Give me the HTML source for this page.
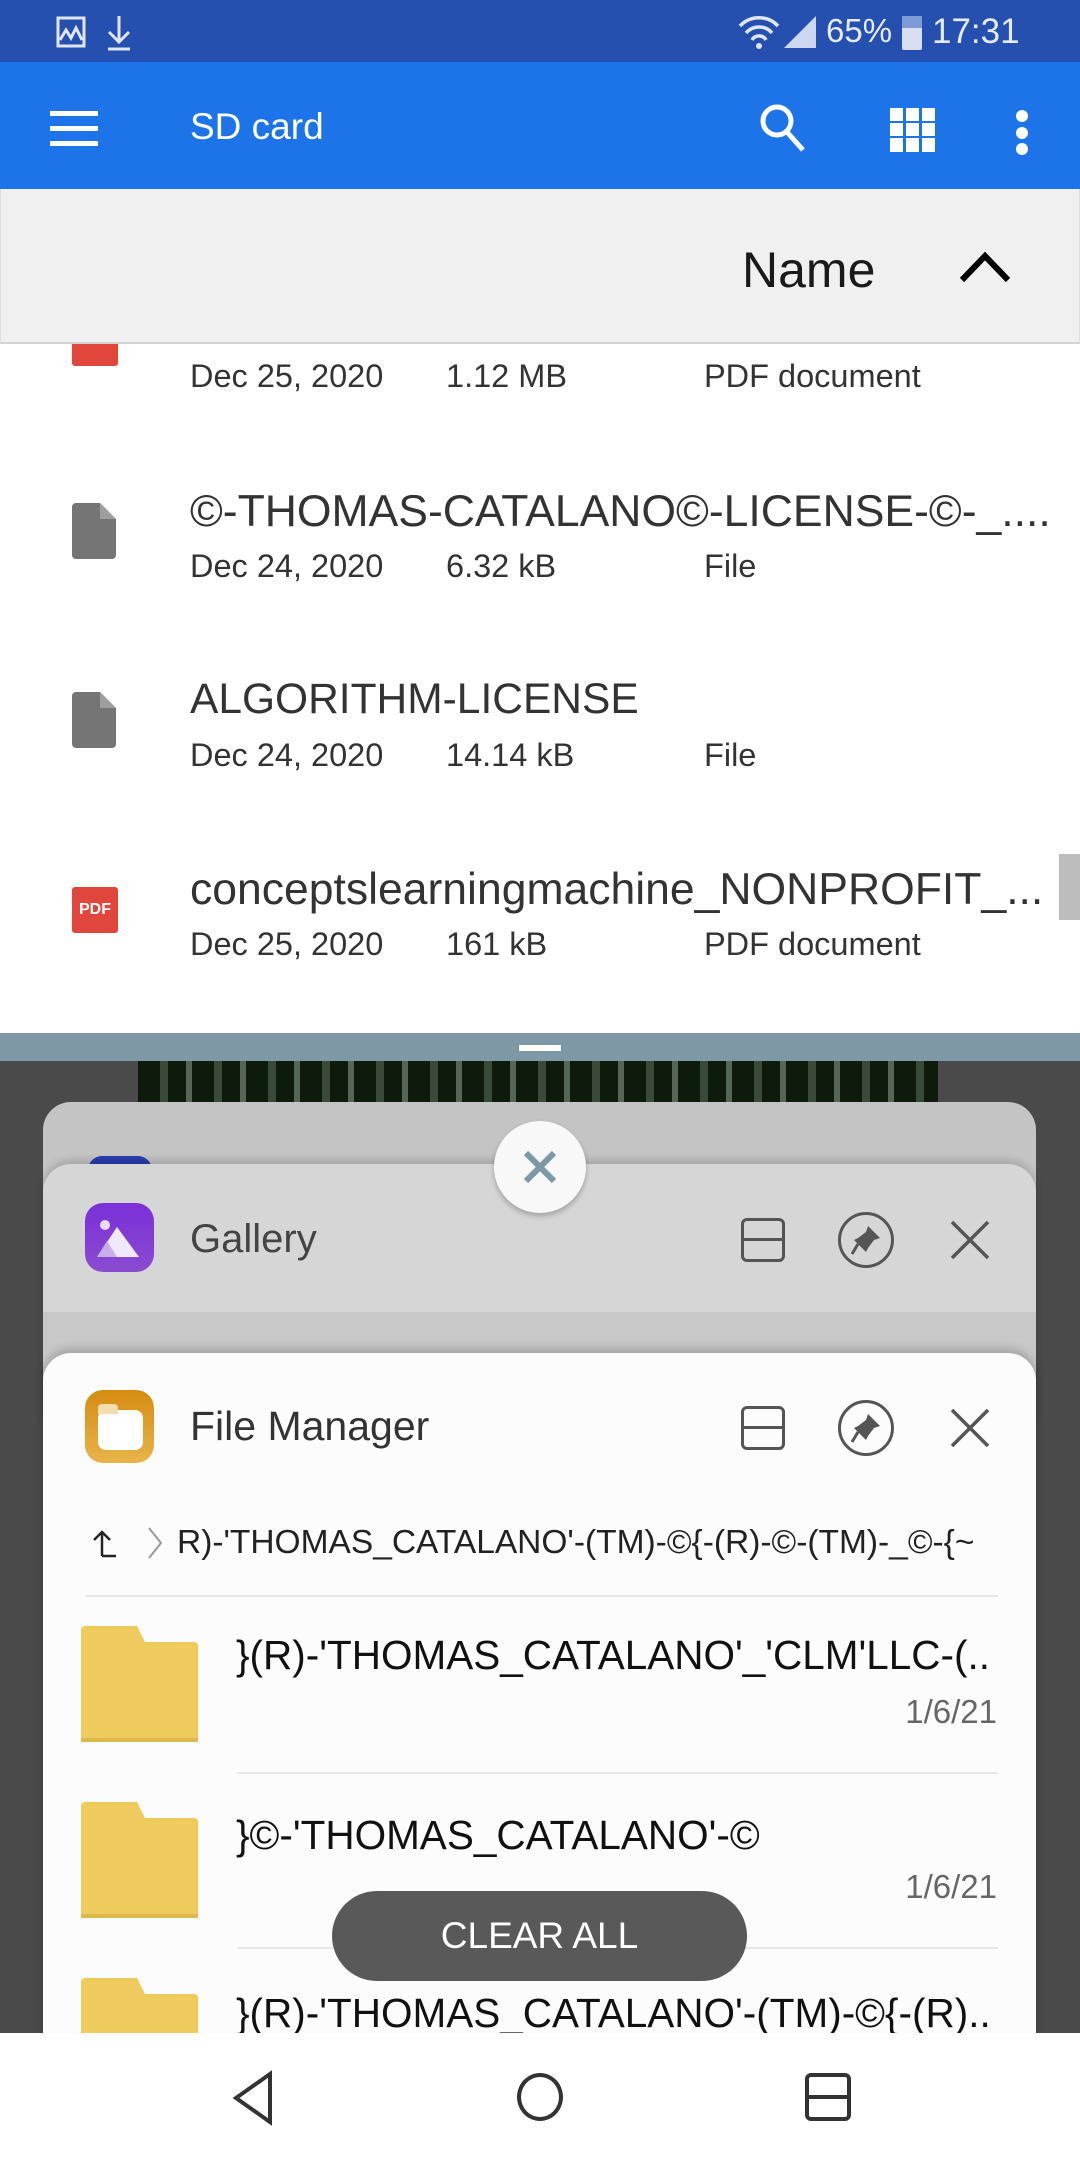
<!DOCTYPE html>
<html><head><meta charset="utf-8"><style>
*{margin:0;padding:0;box-sizing:border-box}
body{width:1080px;height:2160px;position:relative;overflow:hidden;font-family:"Liberation Sans",sans-serif;background:#4a4a4a}
.a{position:absolute}
.t{position:absolute;white-space:nowrap;line-height:1}
</style></head><body>
<div class="a" style="left:0;top:0;width:1080px;height:1033px;background:#fff"></div>
<div class="a" style="left:0;top:0;width:1080px;height:62px;background:#2550b0"></div>
<svg class="a" style="left:56px;top:16px" width="80" height="36" viewBox="0 0 80 36" fill="none" stroke="#e0e6f5" stroke-width="3"><rect x="2" y="2" width="26" height="28"/><path d="M4 24l6-10 5 8 5-10 6 12"/><path d="M63 0v26M53 16l10 10 10-10M52 33h22"/></svg>
<svg class="a" style="left:738px;top:14px" width="80" height="36" viewBox="0 0 80 36"><g fill="none" stroke="#e0e6f5" stroke-width="3.5"><path d="M2 12a26 26 0 0 1 38 0M8 19a17 17 0 0 1 26 0M14 26a8 8 0 0 1 14 0"/></g><circle cx="21" cy="32" r="3" fill="#e0e6f5"/><path d="M46 34L78 2V34Z" fill="#e0e6f5" opacity=".9"/></svg>
<div class="t" style="left:826px;top:14px;font-size:33px;color:#e6ebf7">65%</div>
<div class="a" style="left:902px;top:16px;width:20px;height:34px;background:#d8dff0;border-radius:2px"></div>
<div class="a" style="left:902px;top:16px;width:20px;height:12px;background:#7f9ad8"></div>
<div class="t" style="left:932px;top:14px;font-size:35px;color:#e6ebf7">17:31</div>
<div class="a" style="left:0;top:62px;width:1080px;height:127px;background:#1c74e8"></div>
<div class="a" style="left:50px;top:111px;width:48px;height:5px;background:#fff"></div>
<div class="a" style="left:50px;top:126px;width:48px;height:5px;background:#fff"></div>
<div class="a" style="left:50px;top:141px;width:48px;height:5px;background:#fff"></div>
<div class="t" style="left:190px;top:108px;font-size:37px;color:#fff">SD card</div>
<svg class="a" style="left:758px;top:102px" width="52" height="52" viewBox="0 0 52 52" fill="none" stroke="#fff" stroke-width="5"><circle cx="19" cy="19" r="14"/><path d="M29 30l16 18"/></svg>
<svg class="a" style="left:890px;top:108px" width="46" height="44" viewBox="0 0 46 44" fill="#fff"><rect x="0" y="0" width="13" height="13"/><rect x="16" y="0" width="13" height="13"/><rect x="32" y="0" width="13" height="13"/><rect x="0" y="15" width="13" height="13"/><rect x="16" y="15" width="13" height="13"/><rect x="32" y="15" width="13" height="13"/><rect x="0" y="30" width="13" height="14"/><rect x="16" y="30" width="13" height="14"/><rect x="32" y="30" width="13" height="14"/></svg>
<div class="a" style="left:1016px;top:110px;width:12px;height:12px;border-radius:6px;background:#fff"></div>
<div class="a" style="left:1016px;top:127px;width:12px;height:12px;border-radius:6px;background:#fff"></div>
<div class="a" style="left:1016px;top:143px;width:12px;height:12px;border-radius:6px;background:#fff"></div>
<div class="a" style="left:72px;top:320px;width:46px;height:46px;background:#e0463c;border-radius:3px"></div>
<div class="t" style="left:190px;top:360px;font-size:32.5px;color:#333">Dec 25, 2020</div>
<div class="t" style="left:446px;top:360px;font-size:32.5px;color:#333">1.12 MB</div>
<div class="t" style="left:704px;top:360px;font-size:32.5px;color:#333">PDF document</div>
<div class="a" style="left:0;top:189px;width:1080px;height:155px;background:#f0f0f0;border-bottom:2px solid #d4d4d4;border-left:1px solid #ddd;border-right:1px solid #ddd"></div>
<div class="t" style="left:742px;top:245px;font-size:50px;color:#1a1a1a">Name</div>
<svg class="a" style="left:958px;top:250px" width="54" height="34" viewBox="0 0 54 34" fill="none" stroke="#000" stroke-width="6"><path d="M4 30L27 6l23 24"/></svg>

<svg class="a" style="left:72px;top:503px" width="44" height="56" viewBox="0 0 44 56"><path d="M4 0h24l16 16v36a4 4 0 0 1-4 4H4a4 4 0 0 1-4-4V4a4 4 0 0 1 4-4z" fill="#757575"/><path d="M28 0v16h16" fill="#9e9e9e"/></svg>
<div class="t" style="left:190px;top:490px;font-size:44.5px;color:#333">©-THOMAS-CATALANO©-LICENSE-©-_....</div>
<div class="t" style="left:190px;top:550px;font-size:32.5px;color:#333">Dec 24, 2020</div>
<div class="t" style="left:446px;top:550px;font-size:32.5px;color:#333">6.32 kB</div>
<div class="t" style="left:704px;top:550px;font-size:32.5px;color:#333">File</div>

<svg class="a" style="left:72px;top:692px" width="44" height="56" viewBox="0 0 44 56"><path d="M4 0h24l16 16v36a4 4 0 0 1-4 4H4a4 4 0 0 1-4-4V4a4 4 0 0 1 4-4z" fill="#757575"/><path d="M28 0v16h16" fill="#9e9e9e"/></svg>
<div class="t" style="left:190px;top:679px;font-size:42.5px;color:#333">ALGORITHM-LICENSE</div>
<div class="t" style="left:190px;top:739px;font-size:32.5px;color:#333">Dec 24, 2020</div>
<div class="t" style="left:446px;top:739px;font-size:32.5px;color:#333">14.14 kB</div>
<div class="t" style="left:704px;top:739px;font-size:32.5px;color:#333">File</div>

<div class="a" style="left:72px;top:887px;width:46px;height:46px;background:#e0463c;border-radius:3px"></div>
<div class="t" style="left:79px;top:902px;font-size:16px;color:#fff;font-weight:bold">PDF</div>
<div class="t" style="left:190px;top:868px;font-size:44.5px;color:#333">conceptslearningmachine_NONPROFIT_...</div>
<div class="t" style="left:190px;top:928px;font-size:32.5px;color:#333">Dec 25, 2020</div>
<div class="t" style="left:446px;top:928px;font-size:32.5px;color:#333">161 kB</div>
<div class="t" style="left:704px;top:928px;font-size:32.5px;color:#333">PDF document</div>
<div class="a" style="left:1059px;top:854px;width:21px;height:66px;background:#bdbdbd"></div>
<div class="a" style="left:0;top:1033px;width:1080px;height:28px;background:#7f98a6"></div>
<div class="a" style="left:519px;top:1045px;width:42px;height:6px;background:#fff"></div>
<div class="a" style="left:138px;top:1061px;width:800px;height:41px;background:repeating-linear-gradient(90deg,#0e1a0c 0 22px,#3a4a38 22px 30px,#0e1a0c 30px 48px,#556655 48px 54px)"></div>
<div class="a" style="left:43px;top:1102px;width:993px;height:300px;background:#c4c4c4;border-radius:28px 28px 0 0"></div>
<div class="a" style="left:88px;top:1156px;width:64px;height:40px;background:#2b3cb0;border-radius:14px"></div>
<div class="a" style="left:43px;top:1164px;width:993px;height:260px;background:#d6d6d6;border-radius:28px 28px 0 0;box-shadow:0 -4px 8px rgba(0,0,0,.15)"></div>
<div class="a" style="left:43px;top:1312px;width:993px;height:100px;background:#c8c8c8"></div>
<div class="a" style="left:85px;top:1203px;width:69px;height:69px;border-radius:18px;background:linear-gradient(#7b2fd8,#8a4cd0)"></div>
<svg class="a" style="left:85px;top:1203px" width="69" height="69" viewBox="0 0 69 69"><circle cx="20" cy="22" r="5" fill="#e8dcf8"/><path d="M12 54L32 24l22 30Z" fill="#f0e8fb"/><path d="M12 54l10-16 10 16Z" fill="#c6aee8"/></svg>
<div class="t" style="left:190px;top:1219px;font-size:40px;color:#444">Gallery</div>
<div class="a" style="left:741px;top:1218px;width:44px;height:44px;border:3px solid #555;border-radius:6px"></div>
<div class="a" style="left:741px;top:1238px;width:44px;height:3px;background:#555"></div>
<div class="a" style="left:838px;top:1212px;width:56px;height:56px;border:3px solid #555;border-radius:50%"></div>
<svg class="a" style="left:838px;top:1212px" width="56" height="56" viewBox="0 0 56 56"><path d="M30 14l12 12-6 2-6 8-2 4-12-12 4-2 8-6z" fill="#555"/><path d="M20 32l-6 10" stroke="#555" stroke-width="3"/></svg>
<svg class="a" style="left:948px;top:1218px" width="44" height="44" viewBox="0 0 44 44" stroke="#555" stroke-width="3.5"><path d="M4 4l36 36M40 4L4 40"/></svg>
<div class="a" style="left:494px;top:1121px;width:92px;height:92px;border-radius:50%;background:#f8f8f8;box-shadow:0 3px 6px rgba(0,0,0,.25)"></div>
<svg class="a" style="left:522px;top:1149px" width="36" height="36" viewBox="0 0 36 36" stroke="#7f98a6" stroke-width="6"><path d="M4 4l28 28M32 4L4 32"/></svg>
<div class="a" style="left:43px;top:1353px;width:993px;height:700px;background:#fcfcfc;border-radius:28px 28px 0 0;box-shadow:0 -4px 10px rgba(0,0,0,.2)"></div>
<div class="a" style="left:85px;top:1390px;width:69px;height:73px;border-radius:18px;background:linear-gradient(#d58c10,#e8b44a)"></div>
<div class="a" style="left:98px;top:1410px;width:45px;height:40px;border-radius:8px;background:#fff"></div>
<div class="a" style="left:98px;top:1404px;width:20px;height:10px;border-radius:4px 4px 0 0;background:#f6ddb0"></div>
<div class="t" style="left:190px;top:1406px;font-size:41px;color:#333">File Manager</div>
<div class="a" style="left:741px;top:1406px;width:44px;height:44px;border:3px solid #555;border-radius:6px"></div>
<div class="a" style="left:741px;top:1426px;width:44px;height:3px;background:#555"></div>
<div class="a" style="left:838px;top:1400px;width:56px;height:56px;border:3px solid #555;border-radius:50%"></div>
<svg class="a" style="left:838px;top:1400px" width="56" height="56" viewBox="0 0 56 56"><path d="M30 14l12 12-6 2-6 8-2 4-12-12 4-2 8-6z" fill="#555"/><path d="M20 32l-6 10" stroke="#555" stroke-width="3"/></svg>
<svg class="a" style="left:948px;top:1406px" width="44" height="44" viewBox="0 0 44 44" stroke="#555" stroke-width="3.5"><path d="M4 4l36 36M40 4L4 40"/></svg>
<svg class="a" style="left:90px;top:1528px" width="28" height="30" viewBox="0 0 28 30" fill="none" stroke="#222" stroke-width="2.5"><path d="M12 28V4M4 12l8-8 8 8M12 28h14"/></svg>
<svg class="a" style="left:146px;top:1526px" width="18" height="34" viewBox="0 0 18 34" fill="none" stroke="#999" stroke-width="2"><path d="M3 2l12 15L3 32"/></svg>
<div class="t" style="left:177px;top:1526px;font-size:33.5px;color:#222;width:805px;overflow:hidden">R)-'THOMAS_CATALANO'-(TM)-©{-(R)-©-(TM)-_©-{~</div>
<div class="a" style="left:85px;top:1595px;width:913px;height:2px;background:#e8e8e8"></div>
<svg class="a" style="left:81px;top:1626px" width="117" height="116" viewBox="0 0 117 116"><path d="M4 0h52l8 16h49a4 4 0 0 1 4 4v92a4 4 0 0 1-4 4H4a4 4 0 0 1-4-4V4a4 4 0 0 1 4-4z" fill="#eecb5c"/><path d="M0 114h117" stroke="#dfb84a" stroke-width="4"/></svg>
<div class="t" style="left:236px;top:1635px;font-size:40.5px;color:#111">}(R)-'THOMAS_CATALANO'_'CLM'LLC-(..</div>
<div class="t" style="left:893px;top:1695px;font-size:33px;color:#666;width:104px;text-align:right">1/6/21</div>
<div class="a" style="left:237px;top:1772px;width:761px;height:2px;background:#e8e8e8"></div>
<svg class="a" style="left:81px;top:1802px" width="117" height="116" viewBox="0 0 117 116"><path d="M4 0h52l8 16h49a4 4 0 0 1 4 4v92a4 4 0 0 1-4 4H4a4 4 0 0 1-4-4V4a4 4 0 0 1 4-4z" fill="#eecb5c"/><path d="M0 114h117" stroke="#dfb84a" stroke-width="4"/></svg>
<div class="t" style="left:236px;top:1815px;font-size:40.5px;color:#111">}©-'THOMAS_CATALANO'-©</div>
<div class="t" style="left:893px;top:1870px;font-size:33px;color:#666;width:104px;text-align:right">1/6/21</div>
<div class="a" style="left:237px;top:1947px;width:761px;height:2px;background:#e8e8e8"></div>
<svg class="a" style="left:81px;top:1978px" width="117" height="116" viewBox="0 0 117 116"><path d="M4 0h52l8 16h49a4 4 0 0 1 4 4v92a4 4 0 0 1-4 4H4a4 4 0 0 1-4-4V4a4 4 0 0 1 4-4z" fill="#eecb5c"/></svg>
<div class="t" style="left:236px;top:1993px;font-size:40.5px;color:#111">}(R)-'THOMAS_CATALANO'-(TM)-©{-(R)..</div>
<div class="a" style="left:332px;top:1891px;width:415px;height:90px;border-radius:45px;background:#595959"></div>
<div class="t" style="left:332px;top:1917px;width:415px;text-align:center;font-size:37px;color:#fff">CLEAR ALL</div>
<div class="a" style="left:0;top:2033px;width:1080px;height:127px;background:#fff"></div>
<svg class="a" style="left:228px;top:2070px" width="60" height="56" viewBox="0 0 60 56" fill="none" stroke="#333" stroke-width="4"><path d="M42 4L8 28l34 24z"/></svg>
<div class="a" style="left:517px;top:2073px;width:46px;height:48px;border:4px solid #333;border-radius:50%"></div>
<div class="a" style="left:805px;top:2073px;width:46px;height:48px;border:4px solid #333;border-radius:6px"></div>
<div class="a" style="left:805px;top:2095px;width:46px;height:4px;background:#333"></div>
</body></html>
